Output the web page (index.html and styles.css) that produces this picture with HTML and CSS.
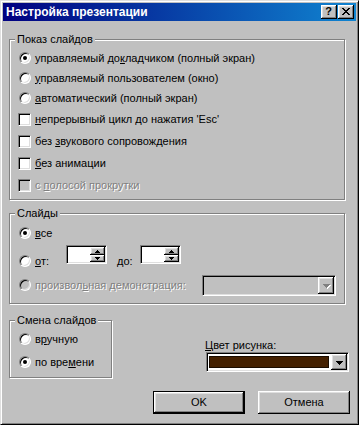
FILE: index.html
```html
<!DOCTYPE html>
<html lang="ru">
<head>
<meta charset="utf-8">
<title>Настройка презентации</title>
<link rel="stylesheet" href="styles.css">
</head>
<body>
<div class="window">
  <div class="titlebar">
    <span class="title">Настройка презентации</span>
    <span class="tbtns">
      <span class="tbtn raised help">?</span>
      <span class="tbtn raised close"><svg width="8" height="7" viewBox="0 0 8 7" shape-rendering="crispEdges"><path d="M0 0h2v1h-2zM6 0h2v1h-2zM1 1h2v1h-2zM5 1h2v1h-2zM2 2h4v1h-4zM3 3h2v1h-2zM2 4h4v1h-4zM1 5h2v1h-2zM5 5h2v1h-2zM0 6h2v1h-2zM6 6h2v1h-2z" fill="#000"/></svg></span>
    </span>
  </div>
  <div class="content">
    <fieldset class="group g1">
      <legend>Показ слайдов</legend>
      <div class="row"><span class="radio checked"></span><span class="lbl">управляемый до<u>к</u>ладчиком (полный экран)</span></div>
      <div class="row"><span class="radio"></span><span class="lbl"><u>у</u>правляемый пользователем (окно)</span></div>
      <div class="row"><span class="radio"></span><span class="lbl"><u>а</u>втоматический (полный экран)</span></div>
      <div class="row cbrow"><span class="check"></span><span class="lbl"><u>н</u>епрерывный цикл до нажатия 'Esc'</span></div>
      <div class="row cbrow"><span class="check"></span><span class="lbl">без <u>з</u>вукового сопровождения</span></div>
      <div class="row cbrow"><span class="check"></span><span class="lbl"><u>б</u>ез анимации</span></div>
      <div class="row cbrow"><span class="check disabled"></span><span class="lbl dis">с <u>п</u>олосой прокрутки</span></div>
    </fieldset>

    <fieldset class="group g2">
      <legend>Слайды</legend>
      <div class="row"><span class="radio checked"></span><span class="lbl"><u>в</u>се</span></div>
      <div class="row range">
        <span class="radio"></span><span class="lbl from"><u>о</u>т:</span>
        <span class="spinner sunken"><span class="field"></span><span class="spin"><span class="sbtn raised up"><svg width="5" height="3" viewBox="0 0 5 3" shape-rendering="crispEdges"><path d="M2 0h1v1h-1zM1 1h3v1h-3zM0 2h5v1h-5z" fill="#000"/></svg></span><span class="sbtn raised down"><svg width="5" height="3" viewBox="0 0 5 3" shape-rendering="crispEdges"><path d="M0 0h5v1h-5zM1 1h3v1h-3zM2 2h1v1h-1z" fill="#000"/></svg></span></span></span>
        <span class="lbl to"><u>д</u>о:</span>
        <span class="spinner sunken"><span class="field"></span><span class="spin"><span class="sbtn raised up"><svg width="5" height="3" viewBox="0 0 5 3" shape-rendering="crispEdges"><path d="M2 0h1v1h-1zM1 1h3v1h-3zM0 2h5v1h-5z" fill="#000"/></svg></span><span class="sbtn raised down"><svg width="5" height="3" viewBox="0 0 5 3" shape-rendering="crispEdges"><path d="M0 0h5v1h-5zM1 1h3v1h-3zM2 2h1v1h-1z" fill="#000"/></svg></span></span></span>
      </div>
      <div class="row custom">
        <span class="radio disabled"></span><span class="lbl dis">произвол<u>ь</u>ная демонстрация:</span>
        <span class="combo sunken disabled-combo"><span class="cfield"></span><span class="cbtn raised"><svg class="dis-arrow" width="7" height="4" viewBox="0 0 7 4" shape-rendering="crispEdges"><path d="M0 0h7v1h-7zM1 1h5v1h-5zM2 2h3v1h-3zM3 3h1v1h-1z" fill="#808080"/></svg></span></span>
      </div>
    </fieldset>

    <div class="bottom">
      <fieldset class="group g3">
        <legend>Смена слайдов</legend>
        <div class="row"><span class="radio"></span><span class="lbl">в<u>р</u>учную</span></div>
        <div class="row second"><span class="radio checked"></span><span class="lbl">по вре<u>м</u>ени</span></div>
      </fieldset>
      <div class="colorcol">
        <div class="clabel"><u>Ц</u>вет рисунка:</div>
        <div class="combo sunken color"><span class="cfield"><span class="swatch"></span></span><span class="cbtn raised"><svg width="7" height="4" viewBox="0 0 7 4" shape-rendering="crispEdges"><path d="M0 0h7v1h-7zM1 1h5v1h-5zM2 2h3v1h-3zM3 3h1v1h-1z" fill="#000"/></svg></span></div>
      </div>
    </div>

    <div class="buttons">
      <span class="pbtn default"><span class="pinner raised">OK</span></span>
      <span class="pbtn"><span class="pinner raised">Отмена</span></span>
    </div>
  </div>
</div>
</body>
</html>
```

FILE: styles.css
```css
html, body {
  margin: 0;
  padding: 0;
  background: #c0c0c0;
}
body {
  font-family: "Liberation Sans", Arial, sans-serif;
  font-size: 11px;
  color: #000;
}
.window {
  width: 359px;
  height: 425px;
  box-sizing: border-box;
  border: 1px solid;
  border-color: #dfdfdf #000 #000 #dfdfdf;
  box-shadow: inset 1px 1px 0 #fff, inset -1px -1px 0 #808080;
  padding: 2px;
  background: #c0c0c0;
}
.titlebar {
  height: 18px;
  display: flex;
  align-items: center;
  justify-content: space-between;
  background: linear-gradient(to right, #000080, #1084d0);
  padding: 0 2px 0 3px;
}
.title {
  color: #fff;
  font-weight: bold;
  font-size: 12px;
  line-height: 14px;
}
.tbtns {
  display: flex;
  gap: 1px;
}
.raised {
  background: #c0c0c0;
  box-shadow: inset -1px -1px 0 #000, inset 1px 1px 0 #fff, inset -2px -2px 0 #808080, inset 2px 2px 0 #dfdfdf;
}
.tbtn {
  width: 16px;
  height: 14px;
  box-sizing: border-box;
  display: flex;
  align-items: center;
  justify-content: center;
}
.help {
  font-weight: bold;
  font-size: 11px;
  line-height: 11px;
  padding: 0 1px 1px 0;
}
.close svg {
  display: block;
  margin: 0 1px 1px 0;
}
.content {
  padding-top: 12px;
}
.group {
  margin: 0 0 0 6px;
  border: 1px solid #808080;
  box-shadow: 1px 1px 0 #fff, inset 1px 1px 0 #fff;
  min-width: 0;
  min-inline-size: 0;
  box-sizing: border-box;
}
.group legend {
  padding: 0 2px;
  margin-left: -3px;
  height: 13px;
  line-height: 13px;
  white-space: nowrap;
  background: #c0c0c0;
}
.g1 {
  width: 336px;
  padding: 2px 8px 3px 8px;
}
.g2 {
  width: 336px;
  margin-top: 7px;
  padding: 3px 8px 8px 8px;
}
.row {
  display: flex;
  align-items: center;
  height: 20px;
}
.cbrow {
  height: 22px;
}
.lbl {
  line-height: 13px;
  white-space: nowrap;
}
.dis {
  color: #808080;
  text-shadow: 1px 1px 0 #fff;
}
.radio {
  width: 12px;
  height: 12px;
  box-sizing: border-box;
  flex: none;
  border-radius: 50%;
  border: 1px solid;
  border-color: #808080 #fff #fff #808080;
  box-shadow: inset 1px 1px 0 #000, inset -1px -1px 0 #dfdfdf;
  background: #fff;
  margin: 0 4px 0 1px;
  display: flex;
  align-items: center;
  justify-content: center;
}
.radio.checked::after {
  content: "";
  width: 4px;
  height: 4px;
  border-radius: 50%;
  background: #000;
}
.radio.disabled {
  background: #c0c0c0;
}
.check {
  width: 13px;
  height: 13px;
  box-sizing: border-box;
  flex: none;
  border: 1px solid;
  border-color: #808080 #fff #fff #808080;
  box-shadow: inset 1px 1px 0 #000, inset -1px -1px 0 #dfdfdf;
  background: #fff;
  margin-right: 4px;
}
.check.disabled {
  background: #c0c0c0;
}
.sunken {
  border: 1px solid;
  border-color: #808080 #fff #fff #808080;
  box-shadow: inset 1px 1px 0 #000, inset -1px -1px 0 #dfdfdf;
  padding: 1px;
  box-sizing: border-box;
}
.range {
  margin-top: 8px;
}
.custom {
  margin-top: 4px;
}
.from {
  width: 31px;
}
.to {
  width: 23px;
  margin-left: 10px;
}
.spinner {
  width: 41px;
  height: 19px;
  align-self: flex-start;
  margin-top: -6px;
  background: #fff;
  display: flex;
}
.spinner .field {
  flex: 1;
}
.spin {
  width: 15px;
  display: flex;
  flex-direction: column;
}
.sbtn {
  display: flex;
  align-items: center;
  justify-content: center;
}
.sbtn.up {
  height: 8px;
}
.sbtn.down {
  height: 7px;
}
.sbtn svg {
  display: block;
}
.combo {
  display: flex;
  flex: none;
}
.disabled-combo {
  width: 134px;
  height: 21px;
  margin-left: auto;
  background: #c0c0c0;
}
.cfield {
  flex: 1;
  display: flex;
  align-items: center;
}
.cbtn {
  width: 16px;
  display: flex;
  align-items: center;
  justify-content: center;
}
.cbtn svg {
  display: block;
  margin-top: 1px;
}
.dis-arrow {
  filter: drop-shadow(1px 1px 0 #fff);
}
.bottom {
  display: flex;
  align-items: flex-start;
  margin-top: 10px;
}
.g3 {
  width: 103px;
  padding: 2px 8px 5px 8px;
}
.second {
  margin-top: 3px;
}
.colorcol {
  margin-left: auto;
  margin-right: 6px;
  width: 144px;
  padding-top: 25px;
}
.clabel {
  line-height: 13px;
  margin-left: -1px;
}
.color {
  width: 143px;
  height: 20px;
  background: #fff;
}
.color .cfield {
  padding: 1px 2px 1px 1px;
}
.swatch {
  flex: 1;
  height: 12px;
  background: #442000;
  border: 1px solid #1a0c00;
  box-sizing: border-box;
}
.buttons {
  display: flex;
  justify-content: flex-end;
  gap: 13px;
  margin-top: 13px;
  margin-right: 6px;
}
.pbtn {
  width: 92px;
  height: 23px;
  box-sizing: border-box;
  display: flex;
}
.pbtn.default {
  border: 1px solid #000;
}
.pinner {
  flex: 1;
  display: flex;
  align-items: center;
  justify-content: center;
  line-height: 13px;
}
```
